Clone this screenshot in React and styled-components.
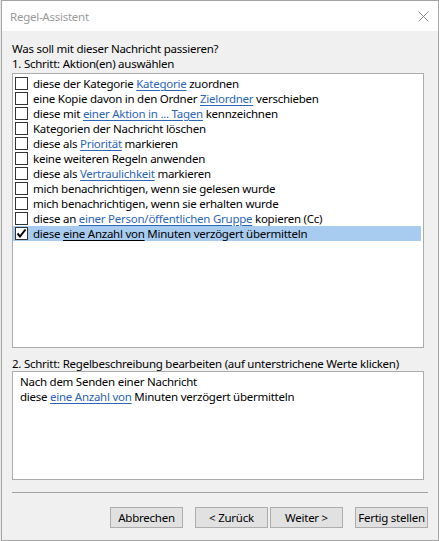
import React from "react"
import styled, { createGlobalStyle } from "styled-components"

const GlobalStyle = createGlobalStyle`
  html, body {
    margin: 0;
    padding: 0;
    background: #e8e8e8;
  }
  body {
    font-family: "Noto Sans", "Open Sans", sans-serif;
    font-size: 11.5px;
    letter-spacing: -0.25px;
    color: #000;
  }
`

const Window = styled.div`
  box-sizing: border-box;
  width: 438px;
  height: 541px;
  margin-left: 1px;
  border: 1px solid #a5a5a5;
  background: #f0f0f0;
  display: flex;
  flex-direction: column;
`

const TitleBar = styled.div`
  height: 30px;
  background: #fff;
  display: flex;
  align-items: center;
  justify-content: space-between;
  padding: 0 9px 0 8px;
  color: #9a9a9a;
`

const CloseIcon = () => (
  <svg width="11" height="11" viewBox="0 0 11 11">
    <path d="M0.5 0.5 L10.5 10.5 M10.5 0.5 L0.5 10.5" stroke="#8a8a8a" strokeWidth="1" fill="none" />
  </svg>
)

const Body = styled.div`
  flex: 1;
  display: flex;
  flex-direction: column;
  padding: 10px 10px 0 10px;
`

const Label = styled.div`
  line-height: 15px;
  height: 15px;
  white-space: nowrap;
  margin-top: ${p => p.$top || 0}px;
`

const ListBox = styled.div`
  box-sizing: border-box;
  width: 412px;
  height: 275px;
  margin-top: 2px;
  border: 1px solid #acacac;
  background: #fff;
  padding: 2px 2px 0 0;
`

const Row = styled.div`
  height: 15px;
  line-height: 15px;
  display: flex;
  align-items: center;
  background: ${p => (p.$selected ? "#a8ccf0" : "transparent")};
  white-space: nowrap;
`

const Box = styled.span`
  box-sizing: border-box;
  width: 13px;
  height: 13px;
  margin: 0 5px 0 2px;
  border: 1px solid #333;
  background: #fff;
  flex: none;
  display: flex;
  align-items: center;
  justify-content: center;
`

const Link = styled.span`
  color: ${p => (p.$plain ? "#000" : "#2b65b5")};
  text-decoration: underline;
  text-underline-offset: 2px;
`

const DescBox = styled.div`
  box-sizing: border-box;
  width: 412px;
  height: 109px;
  border: 1px solid #acacac;
  background: #fff;
  padding: 2px 7px;
  line-height: 15px;
`

const Separator = styled.div`
  width: 416px;
  height: 1px;
  background: #a0a0a0;
  margin-top: 12px;
`

const ButtonRow = styled.div`
  display: flex;
  justify-content: flex-end;
  width: 416px;
  margin-top: 14px;
`

const Button = styled.button`
  box-sizing: border-box;
  width: 73px;
  height: 21px;
  margin-left: ${p => p.$gap}px;
  border: 1px solid #adadad;
  background: #e1e1e1;
  font-family: inherit;
  font-size: inherit;
  letter-spacing: inherit;
  white-space: nowrap;
  color: #000;
  padding: 0;
`

const Check = () => (
  <svg width="11" height="11" viewBox="0 0 11 11">
    <path d="M1.5 5.5 L4 8.5 L9.5 1.5" stroke="#000" strokeWidth="2" fill="none" />
  </svg>
)

const actions = [
  ["diese der Kategorie ", "Kategorie", " zuordnen"],
  ["eine Kopie davon in den Ordner ", "Zielordner", " verschieben"],
  ["diese mit ", "einer Aktion in ... Tagen", " kennzeichnen"],
  ["Kategorien der Nachricht löschen"],
  ["diese als ", "Priorität", " markieren"],
  ["keine weiteren Regeln anwenden"],
  ["diese als ", "Vertraulichkeit", " markieren"],
  ["mich benachrichtigen, wenn sie gelesen wurde"],
  ["mich benachrichtigen, wenn sie erhalten wurde"],
  ["diese an ", "einer Person/öffentlichen Gruppe", " kopieren (Cc)"],
  ["diese ", "eine Anzahl von", " Minuten verzögert übermitteln"],
]

const App = () => (
  <>
    <GlobalStyle />
    <Window>
      <TitleBar>
        <span>Regel-Assistent</span>
        <CloseIcon />
      </TitleBar>
      <Body>
        <Label>Was soll mit dieser Nachricht passieren?</Label>
        <Label>1. Schritt: Aktion(en) auswählen</Label>
        <ListBox>
          {actions.map(([pre, link, post], i) => {
            const selected = i === actions.length - 1
            return (
              <Row key={i} $selected={selected}>
                <Box>{selected && <Check />}</Box>
                <span>
                  {pre}
                  {link && <Link $plain={selected}>{link}</Link>}
                  {post}
                </span>
              </Row>
            )
          })}
        </ListBox>
        <Label $top={8}>2. Schritt: Regelbeschreibung bearbeiten (auf unterstrichene Werte klicken)</Label>
        <DescBox>
          <div>Nach dem Senden einer Nachricht</div>
          <div>
            diese <Link>eine Anzahl von</Link> Minuten verzögert übermitteln
          </div>
        </DescBox>
        <Separator />
        <ButtonRow>
          <Button $gap={0}>Abbrechen</Button>
          <Button $gap={12}>&lt; Zurück</Button>
          <Button $gap={2}>Weiter &gt;</Button>
          <Button $gap={12}>Fertig stellen</Button>
        </ButtonRow>
      </Body>
    </Window>
  </>
)

export default App
